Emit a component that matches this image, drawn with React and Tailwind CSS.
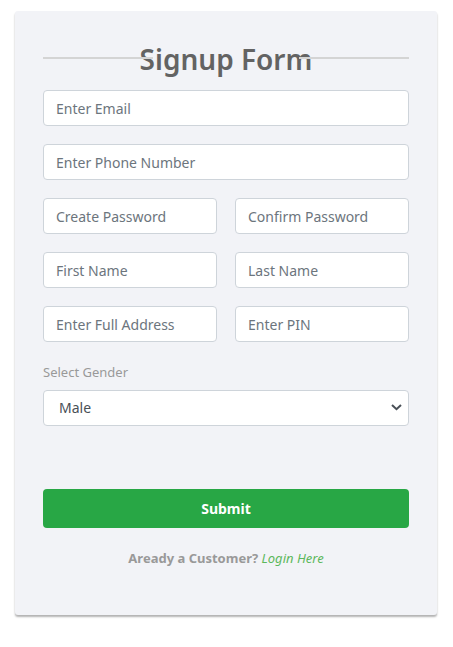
import React from "react";

const controlClass =
  "block h-9 w-full min-w-0 rounded border border-[#ced4da] bg-white px-3 text-[14px] leading-6 text-[#495057] placeholder:text-[#6c757d] placeholder:opacity-100 focus:border-[#5cb85c] focus:outline-none";

function Field({ label, type = "text", name }) {
  return (
    <input
      className={controlClass}
      type={type}
      name={name}
      placeholder={label}
      aria-label={label}
    />
  );
}

export default function App() {
  return (
    <main className="px-4 pt-[11px] pb-8 font-['Noto_Sans','Open_Sans',sans-serif] text-[#999999]">
      <form
        className="-ml-px rounded-[3px] bg-[#f2f3f7] px-7 pt-[26px] pb-[47px] shadow-[0px_2px_2px_rgba(0,0,0,0.3)]"
        onSubmit={(event) => event.preventDefault()}
      >
        <h2 className="relative mb-[9px] text-center text-[28px] leading-[44px] font-semibold text-[#636363] before:absolute before:top-5 before:left-0 before:h-0.5 before:w-[30%] before:bg-[#d4d4d4] after:absolute after:top-5 after:right-0 after:h-0.5 after:w-[30%] after:bg-[#d4d4d4]">
          Signup Form
        </h2>

        <div className="grid grid-cols-1 gap-[18px]">
          <Field label="Enter Email" type="email" name="email" />
          <Field label="Enter Phone Number" type="tel" name="phone" />
          <div className="grid grid-cols-2 gap-[18px]">
            <Field label="Create Password" type="password" name="password" />
            <Field label="Confirm Password" type="password" name="confirm" />
            <Field label="First Name" name="firstName" />
            <Field label="Last Name" name="lastName" />
            <Field label="Enter Full Address" name="address" />
            <Field label="Enter PIN" name="pin" />
          </div>
        </div>

        <label htmlFor="gender" className="mt-5 mb-2 block text-[13px] leading-5">
          Select Gender
        </label>
        <div className="relative">
          <select
            id="gender"
            name="gender"
            className="block h-9 w-full appearance-none rounded border border-[#ced4da] bg-white px-[15px] text-[14px] leading-6 text-[#495057] focus:border-[#5cb85c] focus:outline-none"
          >
            <option>Male</option>
            <option>Female</option>
          </select>
          <svg
            className="pointer-events-none absolute top-[14px] right-[7px] h-[7px] w-[11px]"
            viewBox="0 0 11 7"
            fill="none"
            stroke="#495057"
            strokeWidth="2"
            aria-hidden="true"
          >
            <path d="M1 1l4.5 4.2L10 1" />
          </svg>
        </div>

        <button
          type="submit"
          className="mt-[63px] block h-[39px] w-full rounded bg-[#28a745] text-[14px] leading-6 font-bold text-white"
        >
          Submit
        </button>

        <p className="mt-5 text-center text-[13px] leading-5 font-bold">
          Aready a Customer?{" "}
          <a href="#login" className="font-normal text-[#5cb85c] italic">
            Login Here
          </a>
        </p>
      </form>
    </main>
  );
}
